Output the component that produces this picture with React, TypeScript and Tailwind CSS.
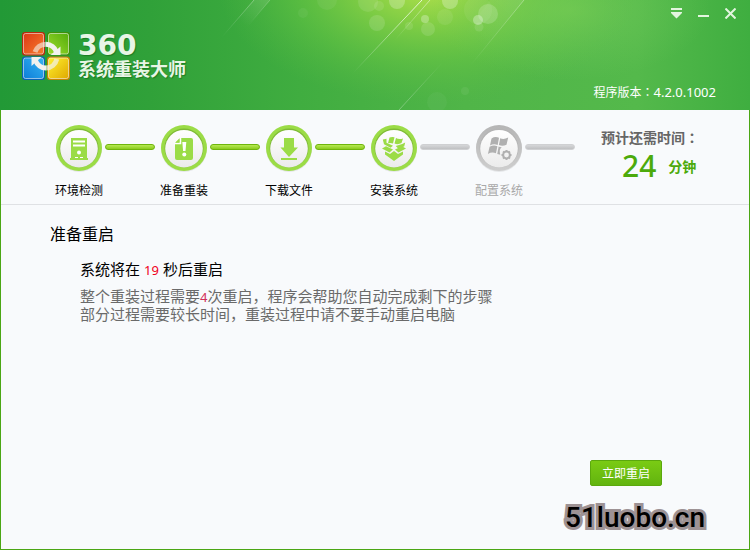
import React from "react";
import clsx from "clsx";

type Step = {
  label: string;
  done: boolean;
  icon: React.ReactNode;
};

const steps: Step[] = [
  {
    label: "环境检测",
    done: true,
    icon: (
      <g>
        <path d="M16 14h16v20h1v2H15v-2h1z" fill="#9bdc46" />
        <path d="M18 17.500h12M18 21.500h12" stroke="#fff" strokeWidth="2" />
        <circle cx="24" cy="28.500" r="2" fill="#fff" />
        <path d="M20 33.500h3M25 33.500h3" stroke="#fff" strokeWidth="1.200" />
      </g>
    ),
  },
  {
    label: "准备重装",
    done: true,
    icon: (
      <g>
        <path d="M20 14h11a2 2 0 0 1 2 2v18a2 2 0 0 1-2 2H17a2 2 0 0 1-2-2V19z" fill="#9bdc46" />
        <path d="M20.500 13.500v6H14.500" stroke="#fff" strokeWidth="1.500" fill="none" />
        <path d="M15.500 18.500 19 15v3.500z" fill="#9bdc46" />
        <path d="M22.300 18h4l-.8 9h-2.400z" fill="#fff" />
        <circle cx="24.300" cy="30.500" r="2" fill="#fff" />
      </g>
    ),
  },
  {
    label: "下载文件",
    done: true,
    icon: (
      <g fill="#9bdc46">
        <path d="M19 14h10v9.500h4L24 33l-8.500-9.500H19z" />
        <path d="M16 34h16v2H16z" />
      </g>
    ),
  },
  {
    label: "安装系统",
    done: true,
    icon: (
      <g fill="#9bdc46">
        <path d="M19.500 13.500q2.500-1 5-.2L23 19.500q-2.500-1-5-.2z" />
        <path d="M26 14q3 2 7 .4L31.500 19q-3.500 2-7 .5z" />
        <path d="M12.800 15.500l3.700-.7v4l6.500 3-2.500 2-6.500-3.500z" />
        <path d="M35.200 18.500l-3 1.500-6.500 2 2.500 2.500 6-2z" />
        <path d="M12 24.500l4-2.200 7 3.200-3.500 3z" />
        <path d="M36 24.500l-4-2.200-7 3.200 3.500 3z" />
        <path d="M15 27.500l5 2.500 4-3 4 3 5-2.500v3L24 37l-9-6.500z" />
      </g>
    ),
  },
  {
    label: "配置系统",
    done: false,
    icon: (
      <g fill="#b0b0b0">
        <path d="M16.500 14.500q3.500-2.500 7.500-.8L22.700 21q-4-1.700-7.700.5z" />
        <path d="M25.200 14.300q3.800 1.500 8-.8l-1.700 7.200q-3.900 2-7.600.4z" />
        <path d="M14.600 22.800q4-2.300 7.800-.5l-1.500 7q-4-1.700-8 .7z" />
        <path d="M23.600 22.600q1.500.7 3.200.6-3.200 2.400-1.500 7.500l-3-.8z" />
        <circle cx="31.500" cy="31" r="3.400" fill="none" stroke="#b0b0b0" strokeWidth="2" />
        <path
          d="M31.500 26v2M31.500 34v2M26.500 31h2M34.500 31h2M28 27.500l1.400 1.400M33.600 33.100l1.400 1.400M35 27.500l-1.400 1.400M29.400 33.100 28 34.500"
          stroke="#b0b0b0"
          strokeWidth="1.800"
        />
      </g>
    ),
  },
];

function HeaderArt() {
  return (
    <svg
      className="absolute inset-0 h-full w-full"
      viewBox="0 0 750 110"
      preserveAspectRatio="none"
      aria-hidden="true"
    >
      <defs>
        <linearGradient id="base" x1="0" x2="1" y1="0" y2="0">
          <stop offset="0" stopColor="#229936" />
          <stop offset="0.2" stopColor="#30a139" />
          <stop offset="0.4" stopColor="#40ad40" />
          <stop offset="0.62" stopColor="#50b548" />
          <stop offset="0.85" stopColor="#54b94b" />
          <stop offset="1" stopColor="#3fae40" />
        </linearGradient>
        <radialGradient id="glow" gradientUnits="userSpaceOnUse" cx="0" cy="0" r="1" gradientTransform="translate(428 -14) scale(210 118)">
          <stop offset="0" stopColor="#b5e24c" />
          <stop offset="0.3" stopColor="#8fd445" stopOpacity="0.85" />
          <stop offset="0.65" stopColor="#6fca42" stopOpacity="0.45" />
          <stop offset="1" stopColor="#5cbd42" stopOpacity="0" />
        </radialGradient>
        <radialGradient id="side" gradientUnits="userSpaceOnUse" cx="0" cy="0" r="1" gradientTransform="translate(570 10) scale(140 70)">
          <stop offset="0" stopColor="#7ed05a" stopOpacity="0.55" />
          <stop offset="1" stopColor="#74cd5d" stopOpacity="0" />
        </radialGradient>
        <linearGradient id="ray" x1="1" x2="0" y1="0" y2="1">
          <stop offset="0" stopColor="#fff" stopOpacity="0.8" />
          <stop offset="1" stopColor="#fff" stopOpacity="0" />
        </linearGradient>
        <linearGradient id="ray2" x1="1" x2="0" y1="0" y2="1">
          <stop offset="0" stopColor="#fff" stopOpacity="0" />
          <stop offset="1" stopColor="#fff" stopOpacity="0.3" />
        </linearGradient>
        <linearGradient id="sheet" x1="1" x2="0" y1="0" y2="1">
          <stop offset="0" stopColor="#fff" stopOpacity="0.12" />
          <stop offset="0.6" stopColor="#fff" stopOpacity="0" />
        </linearGradient>
      </defs>
      <rect width="750" height="110" fill="url(#base)" />
      <rect width="750" height="110" fill="url(#glow)" />
      <rect width="750" height="110" fill="url(#side)" />
      <path d="M254 0 222 37 240 37 270 0z" fill="url(#sheet)" />
      <path d="M524 0 470 66 440 66 490 0z" fill="url(#sheet)" opacity="0.6" />
      <g stroke="url(#ray)" fill="none">
        <path d="M422 0 353 73" />
        <path d="M430 0 395 40" opacity="0.6" />
        <path d="M254 0 222 37" opacity="0.4" />
        <path d="M270 0 251 22" opacity="0.25" />
        <path d="M524 0 470 66" opacity="0.4" />
      </g>
      <path d="M443 62 399 110" stroke="url(#ray2)" />
      <g fill="#fff">
        <circle cx="327" cy="0" r="10" opacity="0.06" />
        <circle cx="303" cy="13" r="5" opacity="0.05" />
        <circle cx="368" cy="2" r="10" opacity="0.1" />
        <circle cx="379" cy="6" r="5" opacity="0.1" />
        <circle cx="397" cy="1" r="8" opacity="0.24" />
        <circle cx="377" cy="23" r="8" opacity="0.13" />
        <circle cx="450" cy="1" r="8" opacity="0.26" />
        <circle cx="425" cy="19" r="4" opacity="0.28" />
        <circle cx="409" cy="26" r="4" opacity="0.1" />
        <circle cx="428" cy="29" r="7" opacity="0.12" />
        <circle cx="445" cy="17" r="8" opacity="0.08" />
        <circle cx="478" cy="10" r="14" opacity="0.06" />
        <circle cx="488" cy="14" r="10" opacity="0.17" />
        <circle cx="478" cy="20" r="5" opacity="0.3" />
        <circle cx="479" cy="27" r="4.500" opacity="0.1" />
        <circle cx="437" cy="102" r="10" opacity="0.04" />
        <circle cx="465" cy="91" r="4" opacity="0.06" />
      </g>
    </svg>
  );
}

function Logo() {
  return (
    <svg className="h-12 w-12 shrink-0" viewBox="0 0 48 48" aria-hidden="true">
      <defs>
        <linearGradient id="red" x1="0" y1="0" x2="1" y2="1">
          <stop offset="0" stopColor="#dd3a16" />
          <stop offset="1" stopColor="#f77a2c" />
        </linearGradient>
        <linearGradient id="green" x1="0" y1="1" x2="1" y2="0">
          <stop offset="0" stopColor="#9bdb2c" />
          <stop offset="1" stopColor="#55ad0c" />
        </linearGradient>
        <linearGradient id="blue" x1="0" y1="1" x2="1" y2="0">
          <stop offset="0" stopColor="#0d7ed9" />
          <stop offset="1" stopColor="#35b4f2" />
        </linearGradient>
        <linearGradient id="yellow" x1="0" y1="0" x2="1" y2="1">
          <stop offset="0" stopColor="#fff02e" />
          <stop offset="1" stopColor="#e0a900" />
        </linearGradient>
      </defs>
      <rect x="0" y="0" width="23" height="23.500" rx="3" fill="#b92a0c" />
      <rect x="25" y="0" width="23" height="23.500" rx="3" fill="#3d9109" />
      <rect x="0" y="24.500" width="23" height="23.500" rx="3" fill="#0861b5" />
      <rect x="25" y="24.500" width="23" height="23.500" rx="3" fill="#c58300" />
      <g stroke="#fff" strokeOpacity="0.55">
        <rect x="1.500" y="1.500" width="20" height="20.500" rx="2" fill="url(#red)" />
        <rect x="26.500" y="1.500" width="20" height="20.500" rx="2" fill="url(#green)" />
        <rect x="1.500" y="26" width="20" height="20.500" rx="2" fill="url(#blue)" />
        <rect x="26.500" y="26" width="20" height="20.500" rx="2" fill="url(#yellow)" />
      </g>
      <g fill="none" stroke="#f2f2ee" strokeWidth="5">
        <path d="M13 20A11.500 11.500 0 0 1 24 12.200" strokeOpacity="0.6" />
        <path d="M24 12.200A11.500 11.500 0 0 1 34.500 20" />
        <path d="M13.500 28.500A11.500 11.500 0 0 0 24 36" />
        <path d="M24 36A11.500 11.500 0 0 0 34.800 27" strokeOpacity="0.7" />
      </g>
      <path d="M28.500 23h10v-8.500z" fill="#f2f2ee" />
      <path d="M9.500 25H19.500L9.500 34z" fill="#f2f2ee" />
    </svg>
  );
}

function WindowControls() {
  const button = "flex h-[26px] w-[27px] items-center justify-center";
  return (
    <div className="flex pr-1.5">
      <button type="button" aria-label="菜单" className={button}>
        <svg width="11" height="11" viewBox="0 0 11 11" fill="#e3f5df">
          <path d="M0 0h11v2H0zM0 4h11v1L5.500 10.500 0 5z" />
        </svg>
      </button>
      <button type="button" aria-label="最小化" className={button}>
        <svg width="11" height="11" viewBox="0 0 11 11" fill="#e3f5df">
          <path d="M0 7h11v2H0z" />
        </svg>
      </button>
      <button type="button" aria-label="关闭" className={button}>
        <svg width="11" height="11" viewBox="0 0 11 11" stroke="#e3f5df" strokeWidth="2">
          <path d="M.5.5l10 10M10.500.5l-10 10" />
        </svg>
      </button>
    </div>
  );
}

function StepBadge({ step }: { step: Step }) {
  return (
    <svg className="h-12 w-12" viewBox="0 0 48 48" aria-hidden="true">
      <defs>
        <linearGradient id="disc" x1="0" y1="0" x2="0" y2="1">
          <stop offset="0" stopColor="#fff" />
          <stop offset="1" stopColor="#ebebeb" />
        </linearGradient>
        <linearGradient id="grayRing" x1="0" y1="0" x2="0" y2="1">
          <stop offset="0" stopColor="#b5b5b5" />
          <stop offset="1" stopColor="#cecece" />
        </linearGradient>
      </defs>
      <circle cx="24" cy="25" r="23" fill="#000" opacity="0.08" />
      <circle cx="24" cy="24" r="23" fill={step.done ? "#9bdc46" : "url(#grayRing)"} />
      <circle cx="24" cy="24" r="19.500" fill={step.done ? "#7fba37" : "#b4b4b4"} />
      <circle cx="24" cy="24.700" r="18.800" fill="url(#disc)" />
      {step.icon}
    </svg>
  );
}

// The bar after a step takes the colour of the step it leads to
function StepItem({ step, barDone }: { step: Step; barDone: boolean }) {
  return (
    <li className="flex w-[105px] gap-0.5">
      <div className="flex w-12 shrink-0 flex-col items-center">
        <StepBadge step={step} />
        <span
          className={clsx(
            "mt-2 whitespace-nowrap text-[12px] leading-5",
            step.done ? "text-black" : "text-[#a8a8a8]"
          )}
        >
          {step.label}
        </span>
      </div>
      <span
        className={clsx(
          "mt-5 h-[6px] w-[50px] rounded-full border",
          barDone
            ? "border-[#6fb50c] bg-linear-to-b from-[#b6ea50] to-[#8ccb1c]"
            : "border-[#cfd0d2] bg-linear-to-b from-[#d6d7d9] to-[#bfc0c2]"
        )}
      />
    </li>
  );
}

// Full-width colon that sits in the middle of its cell
function Colon() {
  return (
    <span lang="zh-TW" className="font-['Noto_Sans_CJK_TC',sans-serif]">
      ：
    </span>
  );
}

export default function App() {
  return (
    <div
      lang="zh-CN"
      className="flex min-h-screen flex-col bg-[#f8fafc] font-['Noto_Sans_CJK_SC',sans-serif] text-black"
    >
      <header className="relative h-[110px] overflow-hidden bg-[#3aa93c]">
        <HeaderArt />
        <div className="relative flex h-full justify-between">
          <div className="flex items-start gap-2 pt-8 pl-[22px]">
            <Logo />
            <h1 className="pt-0.5 text-[#e8f5e6] [text-shadow:1px_1px_1px_rgba(0,70,0,0.4)]">
              <span className="block font-['DejaVu_Sans',sans-serif] text-[28px] leading-6 font-bold">
                360
              </span>
              <span className="block text-[18px] leading-5 font-bold">系统重装大师</span>
            </h1>
          </div>
          <div className="flex flex-col items-end justify-between">
            <WindowControls />
            <p className="pr-[34px] pb-2 text-[12px] leading-5 text-white">
              程序版本
              <Colon />
              <span className="font-['Noto_Sans',sans-serif] text-[13px]">4.2.0.1002</span>
            </p>
          </div>
        </div>
      </header>

      <main className="flex flex-1 flex-col border-x border-b border-[#4ba614]">
        <section className="flex justify-between border-b border-[#dfe1e4] pt-3.5 pb-1">
          <ol className="flex pl-[54px]">
            {steps.map((step, i) => (
              <StepItem
                key={step.label}
                step={step}
                barDone={steps[i + 1]?.done ?? false}
              />
            ))}
          </ol>
          <div className="pt-0.5 pr-[50px] whitespace-nowrap">
            <p className="text-[14px] leading-[22px] font-bold text-[#666]">
              预计还需时间
              <Colon />
            </p>
            <p className="flex items-center gap-3 pl-[21px] font-bold text-[#4caa0b]">
              <span className="font-['Noto_Sans',sans-serif] text-[30px] leading-9 font-medium">24</span>
              <span className="text-[14px]">分钟</span>
            </p>
          </div>
        </section>

        <section className="pt-4 pl-[49px]">
          <h2 className="text-[16px] leading-6">准备重启</h2>
          <div className="pt-3 pl-[30px]">
            <p className="text-[15px] leading-6">
              系统将在
              <span className="px-1 font-['Noto_Sans',sans-serif] text-[13px] leading-4 text-[#f00020]">19</span>
              秒后重启
            </p>
            <p className="pt-1.5 text-[15px] leading-[18px] text-[#6a6a6a]">
              整个重装过程需要
              <span className="font-['Noto_Sans',sans-serif] text-[13px] leading-4 text-[#d0305a]">4</span>
              次重启，程序会帮助您自动完成剩下的步骤
              <br />
              部分过程需要较长时间，重装过程中请不要手动重启电脑
            </p>
          </div>
        </section>

        <footer className="mt-auto flex flex-col items-end gap-3 pb-[11px]">
          <button
            type="button"
            className="mr-[87px] h-[26px] w-[72px] rounded-xs border border-[#5ba80d] bg-linear-to-b from-[#7acb14] to-[#62b40f] text-[12px] leading-5 text-white"
          >
            立即重启
          </button>
          <p className="mr-11 font-['Roboto',sans-serif] text-[28px] leading-10 font-medium text-black [-webkit-text-stroke:6px_#9d9294] [paint-order:stroke_fill]">
            51luobo.cn
          </p>
        </footer>
      </main>
    </div>
  );
}
